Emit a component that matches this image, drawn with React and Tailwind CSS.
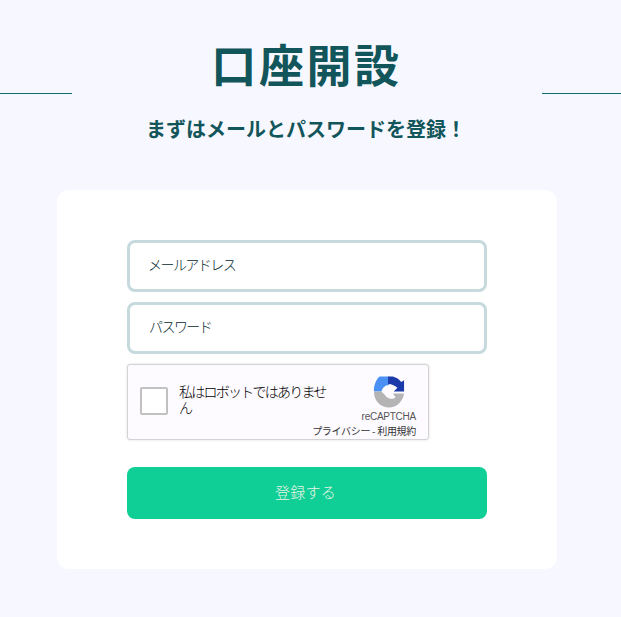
function RecaptchaLogo() {
  return (
    <svg width="32" height="33" viewBox="0 0 34 34" className="block">
      <path d="M1 17 L1 13 C2 9 3 6 5 3 L7 1 L17 1 L17 10 C13 10 10 13 9 17 Z" fill="#4a90f5" />
      <path d="M16 1 L21 1 C25 2 28 4 30 7 L33 5 L33 17 L22 17 L26 13 C24 11 20 9 16 9 Z" fill="#1c3aa9" />
      <path d="M1 17 L9 17 L13 21 C15 25 21 26 24 23 L21 19 L33 19 C32 27 25 34 17 34 C8 34 1 27 1 17 Z" fill="#b4b4b4" />
    </svg>
  );
}

function Field({ placeholder, type, indent }) {
  return (
    <input
      type={type}
      placeholder={placeholder}
      className={`h-[52px] w-full rounded-lg border-[3px] border-[#c6d9dd] bg-white ${indent} pb-[5px] text-[14px] font-light tracking-[-1.55px] text-[#1f4a50] outline-none placeholder:text-[#00282c]`}
    />
  );
}

export default function App() {
  return (
    <div className="min-h-[617px] w-[621px] overflow-hidden bg-[#f7f8ff] font-['Noto_Sans_CJK_JP','Liberation_Sans',sans-serif] text-[#12555a]">
      <header className="flex h-[94px] items-end">
        <div className="h-px w-[72px] bg-[#0a7075]" />
        <h1 className="flex-1 self-start pt-[34px] pr-[1px] text-center text-[45px] leading-[60px] font-bold tracking-[2.6px]">口座開設</h1>
        <div className="h-px w-[79px] bg-[#0a7075]" />
      </header>
      <p className="mt-[20px] w-[612px] text-center text-[20px] leading-[30px] font-bold tracking-[0px]">まずはメールとパスワードを登録！</p>
      <main className="mt-[46px] ml-[57px] w-[500px] rounded-xl bg-white px-[70px] pt-[50px] pb-[50px]">
        <div className="flex flex-col gap-[10px]">
          <Field type="email" placeholder="メールアドレス" indent="pl-[18px]" />
          <Field type="password" placeholder="パスワード" indent="pl-[19px]" />
        </div>
        <div className="mt-[10px] flex h-[76px] w-[302px] rounded-[3px] border border-[#d3d3d3] bg-[#fdfbff] shadow-[0_0_3px_rgba(0,0,0,0.12)]">
          <div className="mt-[22px] ml-[12px] h-[28px] w-[28px] shrink-0 rounded-[2px] border-2 border-[#c1c1c1] bg-white" />
          <div className="mt-[18px] ml-[11px] w-[150px] shrink-0 text-[14px] leading-[16px] font-light tracking-[-1.75px] text-[#000]">私はロボットではありません</div>
          <div className="flex min-w-0 flex-1 flex-col items-end pt-[10px] pr-[12px]">
            <div className="mr-[11px]"><RecaptchaLogo /></div>
            <div className="mt-[3px] font-['Liberation_Sans',sans-serif] text-[10px] leading-[12px] tracking-[-0.25px] text-[#555]">reCAPTCHA</div>
            <div className="mt-[1px] text-[10px] leading-[14px] whitespace-nowrap tracking-[-0.3px] text-[#333]">プライバシー - 利用規約</div>
          </div>
        </div>
        <button className="mt-[27px] h-[52px] w-full rounded-lg bg-[#0fce96] pr-[3px] pb-[1px] text-[15px] font-light tracking-[0.3px] text-[#e8f5e4]">登録する</button>
      </main>
    </div>
  );
}
